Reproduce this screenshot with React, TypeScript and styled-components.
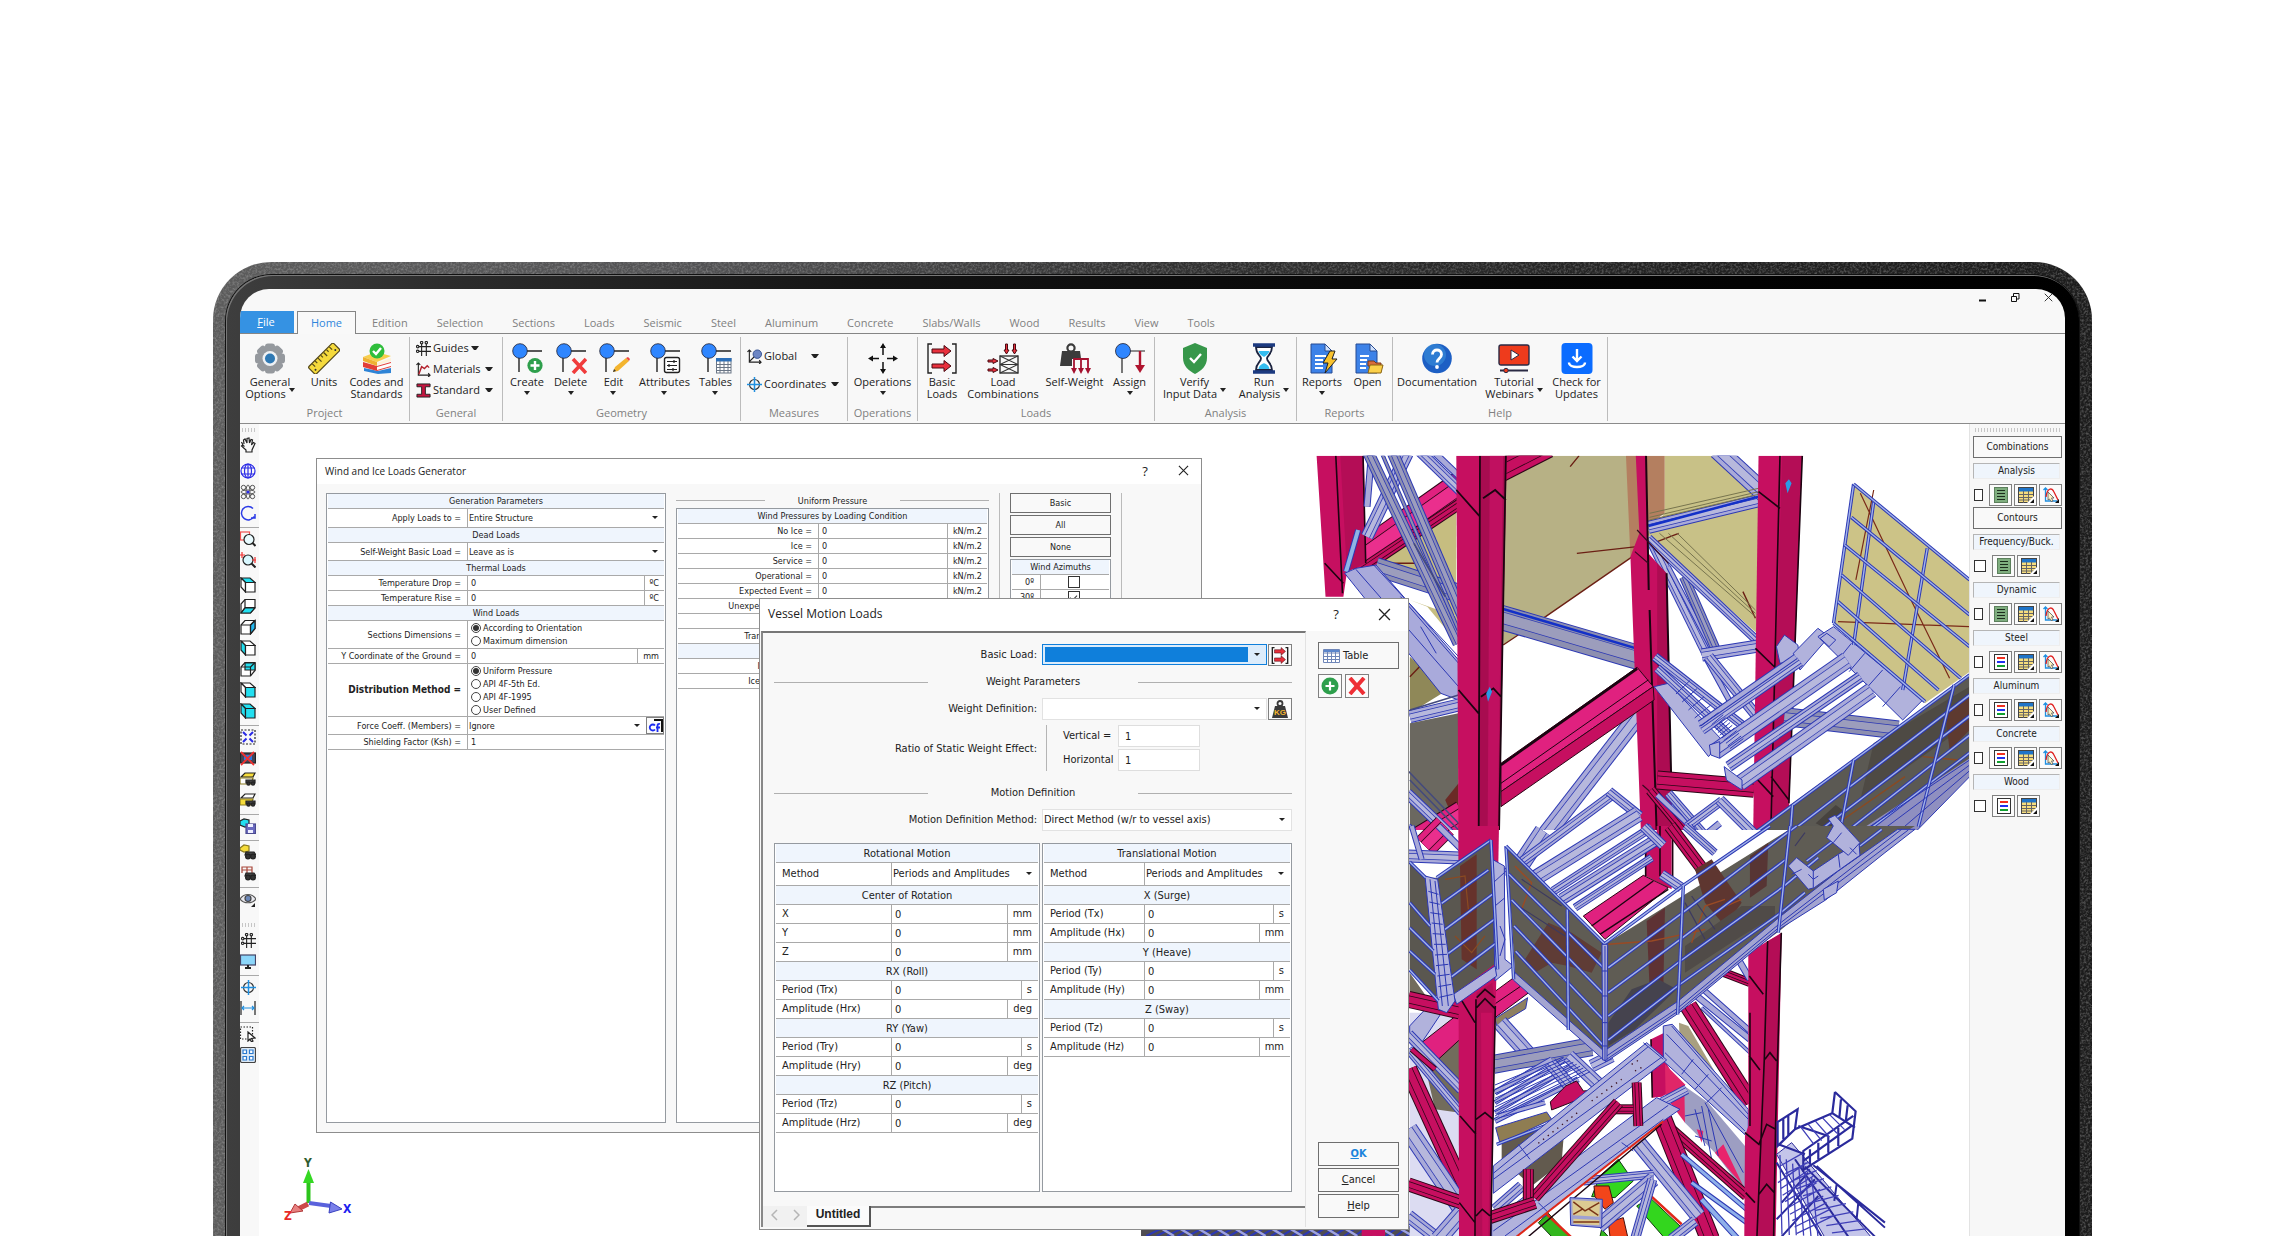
import React, { useId, useState } from "react";
import styled, { createGlobalStyle } from "styled-components";

const UI = `"Open Sans", "Noto Sans", sans-serif`;
const FORM = `"DejaVu Sans Condensed", "DejaVu Sans", "Noto Sans", sans-serif`;

const GlobalStyle = createGlobalStyle`
  *, *::before, *::after { box-sizing: border-box; }
  html, body { margin: 0; background: #fff; }
  button, input, select { font: inherit; color: inherit; margin: 0; }
`;

/* ---------- device ---------- */

const Page = styled.main`
  height: 100vh;
  min-height: 700px;
  overflow: hidden;
  display: flex;
  flex-direction: column;
  padding: 262px 200px 0 213px;
  background: #fff;
  color: #222;
  font-family: ${UI};
  font-size: 11px;
  line-height: 12px;
`;
const Shell = styled.div`
  position: relative;
  flex: 1;
  min-height: 0;
  display: flex;
  padding: 13px 13px 0;
  border-radius: 58px 58px 0 0;
  overflow: hidden;
  background: linear-gradient(90deg, #5c5c5c 0, #535355 25%, #333 50%, #242424 75%, #1c1c1c 100%);
`;
const Grain = styled.svg`
  position: absolute;
  inset: 0;
  width: 100%;
  height: 100%;
  opacity: 0.3;
`;
const Bezel = styled.div`
  position: relative;
  flex: 1;
  min-width: 0;
  display: flex;
  padding: 14px 14px 0 14px;
  border-radius: 46px 46px 0 0;
  box-shadow: 0 0 0 1px #111, inset 1px 1px 0 #777;
  background: linear-gradient(90deg, #3e3e3e 0, #2c2c2c 12%, #141414 35%, #050505 70%, #000 100%);
`;
const Screen = styled.div`
  flex: 1;
  min-width: 0;
  display: flex;
  flex-direction: column;
  overflow: hidden;
  border-radius: 29px 29px 0 0;
  background: #f8f8f8;
`;

/* ---------- title bar and tabs ---------- */

const TitleBar = styled.header`
  height: 22px;
  display: flex;
  justify-content: flex-end;
  align-items: flex-start;
  padding: 1px 9px 0 0;
  gap: 17px;
`;
const CaptionButton = styled.button`
  width: 16px;
  height: 14px;
  padding: 0;
  border: 0;
  background: none;
  display: grid;
  place-items: center;
`;
const TabBar = styled.nav`
  height: 23px;
  display: flex;
  align-items: stretch;
  border-bottom: 1px solid #858585;
`;
const FileTab = styled.button`
  width: 54px;
  margin-right: 3px;
  padding: 0 2px 0 0;
  border: 0;
  background: #3592e3;
  color: #fff;
`;
const Tab = styled.button<{ $on?: boolean }>`
  padding: 0 12px 0 15px;
  margin-bottom: -1px;
  border: 1px solid ${(p) => (p.$on ? "#858585" : "transparent")};
  border-bottom: 0;
  background: ${(p) => (p.$on ? "#f9f9f9" : "none")};
  color: ${(p) => (p.$on ? "#2f86dc" : "#808080")};
  ${(p) => p.$on && "width: 59px; padding: 0;"}
`;

/* ---------- ribbon ---------- */

const Ribbon = styled.div`
  height: 90px;
  display: flex;
  padding: 3px 0 2px;
  border-bottom: 1px solid #8b8b8b;
`;
const Group = styled.section<{ $w: number }>`
  width: ${(p) => p.$w}px;
  display: flex;
  flex-direction: column;
  justify-content: space-between;
  border-right: 1px solid #bcbcbc;
`;
const GroupItems = styled.div`
  display: flex;
`;
const GroupName = styled.h2`
  margin: 0;
  height: 15px;
  font-size: 11px;
  font-weight: 400;
  line-height: 14px;
  text-align: center;
  color: #808080;
`;
const Tool = styled.button<{ $w: number }>`
  width: ${(p) => p.$w}px;
  padding: 6px 0 0;
  border: 0;
  background: none;
  display: flex;
  flex-direction: column;
  align-items: center;
  gap: 2px;
  white-space: nowrap;
  font-weight: 500;
`;
const ToolText = styled.span<{ $below?: boolean }>`
  display: flex;
  flex-direction: column;
  align-items: center;
  gap: ${(p) => (p.$below ? 3 : 0)}px;
`;
const LastLine = styled.span`
  display: flex;
  gap: 3px;
`;
const Caret = styled.i`
  display: block;
  flex: none;
  border: 3px solid transparent;
  border-top: 4px solid #222;
  border-bottom: 0;
`;
const SmallTools = styled.div<{ $gap: number; $top: number }>`
  display: flex;
  flex-direction: column;
  gap: ${(p) => p.$gap}px;
  padding: ${(p) => p.$top}px 0 0 6px;
`;
const SmallTool = styled.button<{ $w: number }>`
  height: 16px;
  padding: 0;
  border: 0;
  background: none;
  display: grid;
  grid-template-columns: 15px ${(p) => p.$w}px 8px;
  align-items: center;
  gap: 2px;
  text-align: left;
  white-space: nowrap;
  font-weight: 500;
`;

/* ---------- work area ---------- */

const Work = styled.div`
  flex: 1;
  min-height: 0;
  display: flex;
`;
const LeftBar = styled.aside`
  width: 19px;
  display: flex;
  flex-direction: column;
  background: #f8f8f8;
`;
const SideButton = styled.button`
  height: 21px;
  width: 16px;
  padding: 0 0 3px;
  border: 0;
  background: none;
  flex: none;
  display: grid;
  place-items: center;
`;
const SideRule = styled.hr`
  flex: none;
  width: 100%;
  height: 1px;
  margin: 2px 0;
  border: 0;
  background: #a9a9a9;
`;
const Grip = styled.div`
  flex: none;
  height: 4px;
  margin: 4px 2px;
  background: repeating-linear-gradient(90deg, #c6c6c6 0 1px, transparent 1px 3px);
`;
const Spacer = styled.div<{ $h: number }>`
  flex: none;
  height: ${(p) => p.$h}px;
`;
const Canvas = styled.section`
  position: relative;
  flex: 1;
  min-width: 0;
  overflow: hidden;
  background: #fff;
`;
const Model = styled.svg`
  position: absolute;
  left: 0;
  top: 0;
  width: 1710px;
  height: 813px;
`;
const RightBar = styled.aside`
  width: 96px;
  padding: 0 3px 0 3px;
  border-left: 1px solid #e3e3e3;
  background: #f7f7f7;
  display: flex;
  flex-direction: column;
  font-family: ${FORM};
  font-size: 10px;
`;
const PushButton = styled.button<{ $h?: number; $start?: boolean }>`
  flex: none;
  height: ${(p) => p.$h ?? 22}px;
  padding: 0 4px;
  border: 1px solid #6f6f6f;
  background: #f9f9f9;
  display: flex;
  align-items: center;
  justify-content: ${(p) => (p.$start ? "flex-start" : "center")};
  gap: 3px;
`;
const PanelName = styled.h3`
  margin: 5px 2px 5px 0;
  height: 16px;
  border: 1px solid #b5b5b5;
  border-right-color: #eee;
  border-bottom-color: #eee;
  background: #eff5fc;
  font-size: 10px;
  font-weight: 400;
  line-height: 14px;
  text-align: center;
`;
const PanelTools = styled.div<{ $tight?: boolean }>`
  height: 22px;
  margin-bottom: ${(p) => (p.$tight ? 1 : 0)}px;
  display: flex;
  align-items: center;
  gap: 2px;
`;
const Tick = styled.input`
  appearance: none;
  width: 12px;
  height: 12px;
  margin: 0 4px 0 1px;
  border: 1px solid #333;
  background: #fff;
  display: grid;
  place-items: center;
  &:checked::after {
    content: "";
    width: 7px;
    height: 4px;
    border: solid #333;
    border-width: 0 0 1px 1px;
    transform: rotate(-45deg);
  }
`;
const IconButton = styled.button<{ $w?: number; $h?: number }>`
  flex: none;
  width: ${(p) => p.$w ?? 23}px;
  height: ${(p) => p.$h ?? 22}px;
  padding: 0;
  border: 1px solid #808080;
  background: #fbfbfb;
  display: grid;
  place-items: center;
`;

/* ---------- windows ---------- */

const Window = styled.section<{ $x: number; $y: number; $w: number; $h: number }>`
  position: absolute;
  left: ${(p) => p.$x}px;
  top: ${(p) => p.$y}px;
  width: ${(p) => p.$w}px;
  min-height: ${(p) => p.$h}px;
  display: flex;
  flex-direction: column;
  border: 1px solid #8d8d8d;
  background: #f8f8f8;
  font-family: ${FORM};
`;
const WindowTitle = styled.header<{ $h: number; $size: number; $gap: number; $end: number }>`
  height: ${(p) => p.$h}px;
  display: flex;
  align-items: center;
  gap: ${(p) => p.$gap}px;
  padding: 0 ${(p) => p.$end}px 2px 8px;
  background: #fff;
  font-family: ${UI};
  font-size: ${(p) => p.$size}px;
`;
const WindowName = styled.h2`
  flex: 1;
  margin: 0;
  font-size: inherit;
  font-weight: 400;
`;
const WindowButton = styled.button`
  width: 16px;
  height: 16px;
  padding: 0;
  border: 0;
  background: none;
  font-size: 13px;
  display: grid;
  place-items: center;
`;
const WindBody = styled.div`
  flex: 1;
  display: grid;
  grid-template-columns: 340px 313px 1px 101px 1px;
  column-gap: 10px;
  padding: 9px;
  font-size: 9px;
`;
const Column = styled.div`
  display: flex;
  flex-direction: column;
`;
const RuleColumn = styled.div`
  background: #bbb;
`;
const Buttons = styled.div`
  display: flex;
  flex-direction: column;
  gap: 2px;
`;
const Sheet = styled.div`
  flex: 1;
  border: 1px solid #959aa0;
  background: #fff;
  padding: 0 1px;
`;
const SheetHead = styled.h4<{ $h: number }>`
  margin: 0;
  height: ${(p) => p.$h}px;
  border-bottom: 1px solid #a9a9a9;
  background: #eff5fd;
  font-size: inherit;
  font-weight: 400;
  line-height: ${(p) => p.$h}px;
  text-align: center;
`;
const SheetRow = styled.div<{ $h: number; $label: number; $left?: boolean }>`
  height: ${(p) => p.$h}px;
  display: grid;
  grid-template-columns: ${(p) => p.$label}px minmax(0, 1fr) auto;
  border-bottom: 1px solid #a9a9a9;
  white-space: nowrap;
  > :first-child {
    align-self: center;
    ${(p) => (p.$left ? "padding-left: 6px;" : "padding-right: 6px; text-align: right;")}
  }
`;
const RowLabel = styled.label``;
const StrongLabel = styled.span`
  font-size: 10px;
  font-weight: 700;
`;
const RowText = styled.span``;
const ValueBox = styled.input`
  width: 100%;
  height: 100%;
  padding: 0 3px;
  border: 0;
  border-left: 1px solid #a9a9a9;
  background: none;
  outline: 0;
`;
const Unit = styled.span<{ $pad: number }>`
  padding: 0 ${(p) => p.$pad}px 0 5px;
  border-left: 1px solid #a9a9a9;
  display: flex;
  align-items: center;
`;
const SelectWrap = styled.span<{ $h?: number; $framed?: boolean; $active?: boolean }>`
  position: relative;
  display: block;
  min-width: 0;
  ${(p) => (p.$h ? `height: ${p.$h}px;` : "")}
  ${(p) => (p.$framed ? "border: 1px solid #e2e2e2; background: #fff;" : "border-left: 1px solid #a9a9a9;")}
  ${(p) =>
    p.$active &&
    `border: 1px solid #0f7fdb; background: linear-gradient(#0f7fdb, #0f7fdb) 2px 2px / calc(100% - 20px) calc(100% - 4px) no-repeat #dcecfb;`}
`;
const SelectBox = styled.select`
  appearance: none;
  display: block;
  width: 100%;
  height: 100%;
  padding: 0 16px 0 1px;
  border: 0;
  outline: 0;
  background: none;
`;
const SelectCaret = styled(Caret)`
  position: absolute;
  right: 6px;
  top: calc(50% - 2px);
  border-top-width: 3px;
  pointer-events: none;
`;
const ForceCell = styled.div`
  display: grid;
  grid-template-columns: minmax(0, 1fr) 18px;
`;
const Radios = styled.div`
  border-left: 1px solid #a9a9a9;
  padding-left: 3px;
  display: flex;
  flex-direction: column;
  justify-content: center;
`;
const RadioLabel = styled.label`
  height: 13px;
  display: flex;
  align-items: center;
  gap: 2px;
`;
const Radio = styled.input`
  appearance: none;
  width: 10px;
  height: 10px;
  margin: 0;
  border: 1px solid #444;
  border-radius: 50%;
  background: #fff;
  display: grid;
  place-items: center;
  &:checked::after {
    content: "";
    width: 6px;
    height: 6px;
    border-radius: 50%;
    background: #333;
  }
`;
const AzimuthCell = styled.div`
  border-left: 1px solid #a9a9a9;
  display: grid;
  place-items: center;
`;
const Divider = styled.h3<{ $h: number; $side: number }>`
  margin: 0;
  height: ${(p) => p.$h}px;
  display: flex;
  align-items: center;
  justify-content: space-between;
  font-size: inherit;
  font-weight: 400;
  &::before, &::after {
    content: "";
    width: ${(p) => p.$side}px;
    height: 1px;
    background: #b0b0b0;
  }
`;
const VesselBody = styled.div`
  flex: 1;
  display: flex;
  font-size: 11px;
`;
const VesselPanel = styled.div`
  width: 545px;
  margin: 0 0 2px 1px;
  display: flex;
  flex-direction: column;
  border: 1px solid #e2e2e2;
  border-top: 2px solid #777;
  border-left: 2px solid #888;
  border-bottom: 0;
  padding-top: 11px;
`;
const VesselForm = styled.div`
  padding: 0 13px 0 11px;
`;
const FormRow = styled.div`
  min-height: 22px;
  display: grid;
  grid-template-columns: 263px minmax(0, 1fr);
  column-gap: 5px;
  align-items: center;
  > :first-child { text-align: right; }
`;
const ControlPair = styled.div`
  display: grid;
  grid-template-columns: minmax(0, 1fr) 24px;
  gap: 1px;
`;
const Ratio = styled.div`
  margin: 5px 0 6px 4px;
  border-left: 1px solid #b5b5b5;
  display: grid;
  grid-template-columns: 52px 82px;
  gap: 2px 3px;
  padding-left: 16px;
  align-items: center;
`;
const NumberBox = styled.input`
  width: 100%;
  height: 22px;
  padding: 0 6px;
  border: 1px solid #dedede;
  background: #fff;
`;
const Sheets = styled.div`
  flex: 1;
  display: grid;
  grid-template-columns: 266px 250px;
  gap: 2px;
  margin-top: 12px;
  padding-left: 11px;
`;
const SheetTabs = styled.div`
  height: 21px;
  margin-top: 14px;
  display: flex;
`;
const Pager = styled.button`
  width: 22px;
  padding: 0;
  border: 0;
  background: #f1f1f1;
  color: #aaa;
`;
const SheetTab = styled.button`
  width: 64px;
  padding: 0 0 4px;
  border: solid #555;
  border-width: 0 2px 2px 0;
  background: #fbfbfb;
  font-weight: 700;
  font-family: "Liberation Sans", sans-serif;
  font-size: 12px;
`;
const TabFill = styled.div`
  flex: 1;
  border-top: 2px solid #7d7d7d;
`;
const Actions = styled.div`
  flex: 1;
  padding: 11px 9px 11px 12px;
  display: flex;
  flex-direction: column;
  justify-content: space-between;
`;
const ActionStack = styled.div<{ $gap: number }>`
  display: flex;
  flex-direction: column;
  gap: ${(p) => p.$gap}px;
`;
const IconPair = styled.div`
  display: flex;
  gap: 3px;
`;
const Primary = styled.b`
  color: #1c84dc;
`;
const AxisLabel = styled.text`
  font: 700 12px ${FORM};
`;

/* ---------- ribbon icons ---------- */

const Big = ({ children }: { children: React.ReactNode }) => (
  <svg width="32" height="31" viewBox="0 0 32 31" fill="none" aria-hidden>
    {children}
  </svg>
);
const Node = () => (
  <>
    <path d="M10 8H31M8 10V29" stroke="#222" strokeWidth="1.4" />
    <circle cx="9" cy="8" r="7.3" fill="#2f86ff" stroke="#223" strokeWidth="0.8" />
  </>
);
const RedArrow = ({ d }: { d: string }) => <path d={d} fill="#e8303c" stroke="#4a0a12" strokeWidth="1" />;

const icons: Record<string, React.ReactNode> = {
  gear: (
    <Big>
      {[0, 45, 90, 135].map((a) => (
        <rect key={a} x="11" y="0.5" width="10" height="30" rx="3" fill="#95999e" transform={`rotate(${a} 16 15.5)`} />
      ))}
      <circle cx="16" cy="15.5" r="11" fill="#95999e" />
      <circle cx="16" cy="15.5" r="7.5" fill="#eef1f4" />
      <circle cx="16" cy="15.5" r="5" fill="#2f79b4" />
    </Big>
  ),
  ruler: (
    <Big>
      <g transform="rotate(-45 16 15.5)">
        <rect x="-1.5" y="10.5" width="35" height="10.5" rx="1.5" fill="#f5da3c" stroke="#54481a" strokeWidth="1.2" />
        <path d="M4 11v4M8 11v3M12 11v5M16 11v3M20 11v5M24 11v3M28 11v4" stroke="#54481a" strokeWidth="1.2" />
        <circle cx="2" cy="17.5" r="1" fill="#333" />
        <circle cx="30" cy="17.5" r="1" fill="#333" />
      </g>
    </Big>
  ),
  books: (
    <Big>
      <path d="M3 25 17 28 30 25v5L17 31 3 28z" fill="#2e84d6" />
      <path d="M2 19 16 23 30 19v5L16 28 2 24z" fill="#e23e37" />
      <path d="M16 24 30 20v3L16 27z" fill="#fff" />
      <path d="M2 14 15 9 30 13 16 19z" fill="#f7cf4d" />
      <path d="M2 14 16 19V23L2 18z" fill="#eeb132" />
      <path d="M16 20 30 15v3L16 22z" fill="#fff2d8" />
      <circle cx="16" cy="8" r="7.5" fill="#2fbe3c" />
      <path d="m12 8 3 3 5-6" stroke="#fff" strokeWidth="2.4" />
    </Big>
  ),
  create: (
    <Big>
      <Node />
      <circle cx="24" cy="22.5" r="7.6" fill="#2e9f4c" />
      <path d="M24 18v9M19.5 22.5h9" stroke="#fff" strokeWidth="2.4" />
    </Big>
  ),
  del: (
    <Big>
      <Node />
      <path d="m18 16 13 14M31 16 18 30" stroke="#f03c3c" strokeWidth="3.6" />
    </Big>
  ),
  edit: (
    <Big>
      <Node />
      <path d="m15 29 2-5L28 15l3 3-11 10z" fill="#f3b42f" />
      <path d="m28 15 3 3 1-2-2-2z" fill="#e44" />
      <path d="m15 29 1-3 2 2z" fill="#333" />
    </Big>
  ),
  attrs: (
    <Big>
      <Node />
      <rect x="15.5" y="14.5" width="15" height="15" rx="2" fill="#fff" stroke="#222" strokeWidth="1.4" />
      <path d="M18 18.5h10M18 22.5h10M18 26.5h10M25 17v3M20 21v3M24 25v3" stroke="#222" strokeWidth="1.2" />
    </Big>
  ),
  tables: (
    <Big>
      <Node />
      <rect x="16.5" y="15.5" width="14.5" height="14.5" fill="#fff" stroke="#6a7686" />
      <rect x="16" y="15" width="15.5" height="3.5" fill="#2c6fb8" />
      <path d="M20 18v12M24 18v12M28 18v12M17 21.5h14M17 24.5h14M17 27.5h14" stroke="#6a7686" strokeWidth="1" />
    </Big>
  ),
  move: (
    <Big>
      <path d="M16 12V4M16 19v8M12 15.5H4M20 15.5h8" stroke="#111" strokeWidth="1.5" />
      <path d="m16 0 3 5h-6zM16 31l3-5h-6zM1 15.5l5-3v6zM31 15.5l-5-3v6z" fill="#111" />
    </Big>
  ),
  basic: (
    <Big>
      <path d="M6 1H2v29h4M26 1h4v29h-4" stroke="#222" strokeWidth="1.4" />
      <RedArrow d="M6 6h12V2.500l7 5.500-7 5.500V10H6z" />
      <RedArrow d="M6 21h12v-3.500l7 5.500-7 5.500V25H6z" />
    </Big>
  ),
  comb: (
    <Big>
      <rect x="13" y="13" width="18" height="17" stroke="#333" strokeWidth="1.4" />
      <path d="M13 21.5h18M13 13l18 8.500M31 13l-18 8.500M13 21.5 31 30M31 21.5 13 30" stroke="#333" strokeWidth="1.1" />
      <RedArrow d="M18.500 1v6H17l2.500 4L22 7h-1.500V1zM26.500 1v6H25l2.500 4L30 7h-1.500V1z" />
      <RedArrow d="M1 17h5v-1.500l5 2.500-5 2.500V19H1zM1 26h5v-1.500l5 2.500-5 2.500V28H1z" />
    </Big>
  ),
  weight: (
    <Big>
      <path d="M3 8h18l2 15H1z" fill="#3b3b3b" />
      <circle cx="12" cy="5" r="3.6" stroke="#3b3b3b" strokeWidth="2.2" />
      <path d="M13 16h18v12H13z" fill="#f8f8f8" />
      <path d="M15 27V16h14v11M22 16v11" stroke="#a5112f" strokeWidth="1.8" />
      <path d="m15 31-3-6h6zM22 31l-3-6h6zM29 31l-3-6h6z" fill="#a5112f" />
    </Big>
  ),
  assign: (
    <Big>
      <path d="M10 8H31M8 10V30" stroke="#222" strokeWidth="1.2" />
      <circle cx="9" cy="8" r="7.5" fill="#2f86ff" stroke="#223" strokeWidth="0.8" />
      <path d="M26 8v15" stroke="#b0142f" strokeWidth="2.4" />
      <path d="m26 30-5-8h10z" fill="#b0142f" />
    </Big>
  ),
  shield: (
    <Big>
      <path d="M16 0 28 5v10c0 8-6 13-12 16C10 28 4 23 4 15V5z" fill="#37974a" />
      <path d="m11 15 4 4 7-8" stroke="#fff" strokeWidth="2.4" />
    </Big>
  ),
  glass: (
    <Big>
      <path d="M8 4c0 8 5 8 5 11.500S8 20 8 27h16c0-7-5-8-5-11.500S24 12 24 4z" fill="#fff" stroke="#1c2440" strokeWidth="1.8" />
      <path d="M10.500 8h11c-.6 3-4 5-5.500 6-1.500-1-5-3-5.500-6zM10.500 26c.5-4 4-5 5.500-6 1.500 1 5 2 5.500 6z" fill="#35bdf0" />
      <path d="M5 2h22M5 29h22" stroke="#1c3a80" strokeWidth="3.4" />
    </Big>
  ),
  report: (
    <Big>
      <path d="M5 1h14l7 7v22H5z" fill="#3d82e8" stroke="#274b92" />
      <path d="M19 1v7h7z" fill="#cfe0fb" stroke="#274b92" />
      <path d="M9 13h11M9 17h8M9 21h8M9 25h8" stroke="#fff" strokeWidth="1.8" />
      <path d="m24 8-7 12h5l-3 10 12-14h-5l3-8z" fill="#f9c22e" stroke="#222" />
    </Big>
  ),
  open: (
    <Big>
      <path d="M4 1h14l7 7v22H4z" fill="#3d82e8" stroke="#274b92" />
      <path d="M18 1v7h7z" fill="#cfe0fb" stroke="#274b92" />
      <path d="M8 13h9M8 17h7M8 21h6M8 25h6" stroke="#fff" strokeWidth="1.8" />
      <path d="M16 18h6l2 2h5v3H16z" fill="#d86b3c" stroke="#7a3a1a" />
      <path d="M18 22h13l-2 8H16z" fill="#fbd04a" stroke="#8a6410" />
    </Big>
  ),
  help: (
    <Big>
      <circle cx="16" cy="15.5" r="14.8" fill="#1d5fc4" />
      <circle cx="14" cy="12" r="11" fill="#3f9ae0" opacity="0.5" />
      <path d="M11.500 11.500c0-6 9-6 9 0 0 4-4.500 4-4.500 8" stroke="#fff" strokeWidth="2.8" />
      <circle cx="16" cy="24" r="1.9" fill="#fff" />
    </Big>
  ),
  video: (
    <Big>
      <rect x="1" y="2" width="30" height="20" rx="2" fill="#ee3b1c" stroke="#2a2a44" strokeWidth="1.4" />
      <path d="m13 7 8 5-8 5z" fill="#fff" stroke="#2a2a44" />
      <path d="M2 27.500h28" stroke="#2a2a44" strokeWidth="1.8" />
      <circle cx="8" cy="27.5" r="2.2" fill="#ee3b1c" stroke="#2a2a44" />
    </Big>
  ),
  update: (
    <Big>
      <rect x="0.5" y="0" width="31" height="31" rx="4" fill="#0b6cff" />
      <path d="M16 6v11M11.500 13.500 16 18l4.500-4.500M8 19.500c0 6 16 6 16 0" stroke="#fff" strokeWidth="2.4" />
    </Big>
  ),
};

const GridIcon = () => (
  <svg width="15" height="15" viewBox="0 0 16 16" fill="none" stroke="#222" strokeWidth="1.2" aria-hidden>
    <path d="M3 6h13M3 11h13M6 3v13M11 3v13" />
    <circle cx="6" cy="1.8" r="1.3" />
    <circle cx="11" cy="1.8" r="1.3" />
    <circle cx="1.8" cy="6" r="1.3" />
    <circle cx="1.8" cy="11" r="1.3" />
  </svg>
);
const TargetIcon = () => (
  <svg width="15" height="15" viewBox="0 0 16 16" fill="none" aria-hidden>
    <circle cx="8" cy="8" r="5.3" stroke="#333" strokeWidth="1.2" />
    <path d="M8 0v16M0 8h16" stroke="#1f8fe0" strokeWidth="1.6" />
  </svg>
);
const smallIcons: Record<string, React.ReactNode> = {
  Guides: <GridIcon />,
  Materials: (
    <svg width="15" height="15" viewBox="0 0 16 16" fill="none" aria-hidden>
      <path d="M2.500 1v13H15M.5 3l2-2 2 2M13 12l2 2-2 2" stroke="#222" strokeWidth="1.2" />
      <path d="m3 13 3-8 3 2 3-3 2 2" stroke="#b3212d" strokeWidth="1.5" />
    </svg>
  ),
  Standard: (
    <svg width="15" height="15" viewBox="0 0 16 16" aria-hidden>
      <path d="M1 1h14v3H10v8h5v3H1v-3h5V4H1z" fill="#c3153f" stroke="#222" />
    </svg>
  ),
  Global: (
    <svg width="15" height="15" viewBox="0 0 16 16" fill="none" aria-hidden>
      <path d="M2.500 1v13H15M.5 3l2-2 2 2M13 12l2 2-2 2M3 13l5-5" stroke="#222" strokeWidth="1.2" />
      <circle cx="11" cy="5.5" r="4.5" fill="#6d86c4" stroke="#34508f" />
    </svg>
  ),
  Coordinates: <TargetIcon />,
};

type ToolDef = { icon: string; w: number; text: string[]; menu?: boolean };
type GroupDef = { name: string; w: number; tools?: ToolDef[]; small?: { name: string; w: number }[]; gap?: number; top?: number };

const groups: GroupDef[] = [
  {
    name: "Project",
    w: 170,
    tools: [
      { icon: "gear", w: 60, text: ["General", "Options"], menu: true },
      { icon: "ruler", w: 48, text: ["Units"] },
      { icon: "books", w: 57, text: ["Codes and", "Standards"] },
    ],
  },
  {
    name: "General",
    w: 93,
    gap: 5,
    top: 3,
    small: [
      { name: "Guides", w: 36 },
      { name: "Materials", w: 50 },
      { name: "Standard", w: 50 },
    ],
  },
  {
    name: "Geometry",
    w: 238,
    tools: [
      { icon: "create", w: 48, text: ["Create"], menu: true },
      { icon: "del", w: 39, text: ["Delete"], menu: true },
      { icon: "edit", w: 47, text: ["Edit"], menu: true },
      { icon: "attrs", w: 55, text: ["Attributes"], menu: true },
      { icon: "tables", w: 47, text: ["Tables"], menu: true },
    ],
  },
  {
    name: "Measures",
    w: 107,
    gap: 12,
    top: 11,
    small: [
      { name: "Global", w: 45 },
      { name: "Coordinates", w: 65 },
    ],
  },
  { name: "Operations", w: 70, tools: [{ icon: "move", w: 69, text: ["Operations"], menu: true }] },
  {
    name: "Loads",
    w: 237,
    tools: [
      { icon: "basic", w: 48, text: ["Basic", "Loads"] },
      { icon: "comb", w: 74, text: ["Load", "Combinations"] },
      { icon: "weight", w: 69, text: ["Self-Weight"] },
      { icon: "assign", w: 41, text: ["Assign"], menu: true },
    ],
  },
  {
    name: "Analysis",
    w: 142,
    tools: [
      { icon: "shield", w: 79, text: ["Verify", "Input Data"], menu: true },
      { icon: "glass", w: 60, text: ["Run", "Analysis"], menu: true },
    ],
  },
  {
    name: "Reports",
    w: 96,
    tools: [
      { icon: "report", w: 50, text: ["Reports"], menu: true },
      { icon: "open", w: 41, text: ["Open"] },
    ],
  },
  {
    name: "Help",
    w: 215,
    tools: [
      { icon: "help", w: 88, text: ["Documentation"] },
      { icon: "video", w: 66, text: ["Tutorial", "Webinars"], menu: true },
      { icon: "update", w: 59, text: ["Check for", "Updates"] },
    ],
  },
];

const tabs = ["Home", "Edition", "Selection", "Sections", "Loads", "Seismic", "Steel", "Aluminum", "Concrete", "Slabs/Walls", "Wood", "Results", "View", "Tools"];

/* ---------- side bar icons ---------- */

const S = ({ children }: { children: React.ReactNode }) => (
  <svg width="16" height="16" viewBox="0 0 16 16" fill="none" stroke="#222" strokeWidth="1.2" aria-hidden>
    {children}
  </svg>
);
const Cube = ({ top, left, front }: { top?: boolean; left?: boolean; front?: boolean }) => (
  <S>
    <path d="M1 1h9l5 4.500H5.500z" fill={top ? "#22dff0" : "#fff"} />
    <path d="m1 1 4.500 4.500V15L1 10z" fill={left ? "#22dff0" : "#fff"} />
    <path d="M5.500 5.500H15V15H5.500z" fill={front ? "#22dff0" : "#fff"} />
  </S>
);
const BackCube = ({ bottom, right, back }: { bottom?: boolean; right?: boolean; back?: boolean }) => (
  <S>
    <path d="M5 1.500h10v8L10.500 15H1V6z" fill="#fff" />
    {back && <path d="M5 2h10v7H5z" fill="#22dff0" />}
    {bottom && <path d="M1 15 5 10h10l-4.500 5z" fill="#22dff0" />}
    {right && <path d="M10.500 6 15 1.500v8L10.500 15z" fill="#22b8f0" />}
    {bottom ? <path d="M5 1.500v8L1 15M5 9.500h10" /> : <path d="M1 6h9.500V15M10.500 6 15 1.500" />}
  </S>
);
const Truck = ({ full }: { full?: boolean }) => (
  <S>
    <path d="M1 6 5 2h10l-2 4z" fill={full ? "#fff" : "#f6dc3a"} />
    <path d="M0 7h13l-2 6H0z" fill={full ? "#f6dc3a" : "#fff"} stroke="#8a7a20" />
    <path d="M6 9h9v3H6z" fill="#444" />
    <circle cx="8.5" cy="12.5" r="1.6" fill="#333" />
    <circle cx="13" cy="12.5" r="1.6" fill="#333" />
  </S>
);
const Binoc = ({ red }: { red?: boolean }) => (
  <S>
    {red ? <path d="M2 8V2h10v6M7 2v6M2 5h10" stroke="#a8473a" /> : <path d="m0 4 4-3 5 1v5l-5 1-4-2z" fill="#f6dc3a" stroke="#8a7a20" />}
    <path d="M6 8h8l2 3H5z" fill="#444" />
    <circle cx="8" cy="12.5" r="2.4" fill="#333" />
    <circle cx="13" cy="12.5" r="2.4" fill="#333" />
  </S>
);

type SideItem = ["icon", string, React.ReactNode] | ["rule"] | ["grip"] | ["space", number];
const sideItems: SideItem[] = [
  ["grip"],
  ["icon", "Pan", <S><path d="M3 8 1.500 5M4 7 3.500 3l1.500-1L7 6V1.500L9 1l.5 5L11 2.500l1.500.5-1 5 2-2.500 1.500 1L12 13v2H6v-2L1.500 9l1-1 2 1.500" /></S>],
  ["space", 5],
  ["icon", "Orbit", <S><g stroke="#2a2ae6"><circle cx="8" cy="8" r="7" /><ellipse cx="8" cy="8" rx="3.5" ry="7" /><path d="M1.500 5h13M1.500 11h13M8 1v14" /></g></S>],
  ["icon", "Spin", <S><g stroke="#444" strokeWidth="0.9"><circle cx="3.5" cy="3.5" r="2.2" /><circle cx="12.5" cy="3.5" r="2.2" /><circle cx="3.5" cy="12.5" r="2.2" /><circle cx="12.5" cy="12.5" r="2.2" /><ellipse cx="8" cy="8" rx="2" ry="7" /><ellipse cx="8" cy="8" rx="7" ry="2" /></g><circle cx="8" cy="8" r="1.6" fill="#2a2ae6" stroke="none" /></S>],
  ["icon", "Rotate", <S><path d="M13 3.500a6.700 6.700 0 1 0 1 8M15 9v4h-4" stroke="#2a3ae6" strokeWidth="1.5" /></S>],
  ["rule"],
  ["icon", "Zoom window", <S><rect x="0.5" y="1" width="9" height="8" stroke="#f05050" /><circle cx="9" cy="8.5" r="5" fill="#e8fbff" /><path d="m12.500 12 3 3" strokeWidth="2" /></S>],
  ["icon", "Zoom", <S><circle cx="8" cy="8" r="5" fill="#d8f8ff" /><path d="m11.500 11.500 4 4" strokeWidth="2" /><path d="M2 0v6M0 3h5M15 5v6M12 8h4" stroke="#f03030" /></S>],
  ["space", 4],
  ["icon", "Top view", <Cube top />],
  ["icon", "Bottom view", <BackCube bottom />],
  ["icon", "Right view", <BackCube right />],
  ["icon", "Left view", <Cube left />],
  ["icon", "Back view", <BackCube back />],
  ["icon", "Front view", <Cube front />],
  ["icon", "Isometric view", <Cube top left front />],
  ["rule"],
  ["icon", "Fit", <S><rect x="1" y="1" width="14" height="14" strokeDasharray="2 1.5" /><path d="m3 3 3.500 3.500M13 3 9.500 6.500M3 13l3.500-3.500M13 13 9.500 9.500" stroke="#2a2ae6" strokeWidth="2" /></S>],
  ["icon", "Remove fit", <S><rect x="0.5" y="3" width="15" height="10" fill="#445" /><path d="M4 5h8v5H4z" fill="#2a7ae6" stroke="none" /><path d="m1 2 13 13M14 2 1 15" stroke="#f03030" strokeWidth="1.8" /></S>],
  ["icon", "Solid", <Truck />],
  ["icon", "Rendered", <Truck full />],
  ["rule"],
  ["icon", "Save view", <S><path d="m0 3 4-2 5 1v6L5 9 0 7z" fill="#22dff0" /><rect x="6" y="6" width="9.5" height="9.5" fill="#6a6ac0" stroke="#4a4a90" /><path d="M8 12h5v3H8zM8 6h5v3H8z" fill="#eef" stroke="none" /></S>],
  ["rule"],
  ["icon", "Find", <Binoc />],
  ["icon", "Find load", <Binoc red />],
  ["rule"],
  ["icon", "Visibility", <S><path d="M0 8c4-6 12-6 16 0-4 5-12 5-16 0z" fill="#e8e8ee" stroke="#555" /><circle cx="8" cy="7.5" r="3" fill="#6b87b8" stroke="#444" /><path d="M15 12v4h-4z" fill="#222" stroke="none" /></S>],
  ["space", 8],
  ["grip"],
  ["icon", "Guides", <GridIcon />],
  ["icon", "Display", <S><rect x="0.5" y="2" width="15" height="10" fill="#8cd6fa" stroke="#446" /><path d="M5 15h6M8 12v3" strokeWidth="2" /></S>],
  ["rule"],
  ["icon", "Origin", <TargetIcon />],
  ["icon", "Dimension", <S><path d="M1 1v14M15 1v14" /><path d="M2 8h12M4 6 2 8l2 2M12 6l2 2-2 2" stroke="#1f8fe0" /></S>],
  ["rule"],
  ["icon", "Select", <S><rect x="0.5" y="1" width="12" height="12" strokeDasharray="1.5 1.5" /><path d="m8 6 7 6-3.500.5L13 15l-1.500 1-1.500-3-2 2z" fill="#fff" /></S>],
  ["icon", "Snap grid", <S><rect x="0.5" y="0.5" width="15" height="15" rx="1.5" fill="#dbe8f5" stroke="#444" /><path d="M3 3h3.500v3.500H3zM9.500 3H13v3.500H9.500zM3 9.500h3.500V13H3zM9.500 9.500H13V13H9.500z" fill="#fff" stroke="#2a7ad0" /></S>],
];

/* ---------- right panel ---------- */

const ListIcon = ({ colour }: { colour?: boolean }) => (
  <svg width="14" height="16" viewBox="0 0 14 16" aria-hidden>
    <rect x="0.5" y="0.5" width="13" height="15" fill={colour ? "#fff" : "#7fae7f"} stroke={colour ? "#333" : "#5c805c"} />
    {colour ? (
      <>
        <path d="M3 4h8" stroke="#f03020" strokeWidth="2" />
        <path d="M3 8h8" stroke="#2030f0" strokeWidth="2" />
        <path d="M3 12h8" stroke="#10a030" strokeWidth="2" />
      </>
    ) : (
      <path d="M3 3.500h8M3 6.500h8M3 9.500h8M3 12.500h8" stroke="#1c2c1c" />
    )}
  </svg>
);
const TableIcon = () => (
  <svg width="16" height="16" viewBox="0 0 16 16" aria-hidden>
    <rect x="0.5" y="0.5" width="15" height="15" fill="#f7dd7c" stroke="#444" />
    <rect x="1" y="1" width="14" height="3.5" fill="#1f74c8" />
    <path d="M5.500 4v12M10.500 4v12M1 7.500h14M1 10.500h14M1 13h14" stroke="#666" />
    <path d="M16 9v7H9z" fill="#fff" />
    <path d="M16 12v4h-4z" fill="#111" />
  </svg>
);
const GraphIcon = () => (
  <svg width="16" height="16" viewBox="0 0 16 16" fill="none" aria-hidden>
    <path d="M2.500 1v13H14M.5 3l2-2 2 2" stroke="#1f8fe0" strokeWidth="1.3" />
    <path d="M3 10C4 1 9 0 11 5l4 8" stroke="#e02020" strokeWidth="1.3" />
    <path d="m5 5 6 6H8.500L10 14l-2 .5L6.500 12 5 13z" fill="#fff3c4" stroke="#555" strokeWidth="0.8" />
    <path d="M16 12v4h-4z" fill="#111" />
  </svg>
);
const panels: { name: string; colour?: boolean; graph?: boolean }[] = [
  { name: "Frequency/Buck." },
  { name: "Dynamic", graph: true },
  { name: "Steel", colour: true, graph: true },
  { name: "Aluminum", colour: true, graph: true },
  { name: "Concrete", colour: true, graph: true },
  { name: "Wood", colour: true },
];
const ResultPanel = ({ name, colour, graph, tight }: { name: string; colour?: boolean; graph?: boolean; tight?: boolean }) => (
  <>
    <PanelName>{name}</PanelName>
    <PanelTools $tight={tight}>
      <Tick type="checkbox" aria-label={`Show ${name}`} />
      <IconButton aria-label={`${name} diagram`}><ListIcon colour={colour} /></IconButton>
      <IconButton aria-label={`${name} table`}><TableIcon /></IconButton>
      {graph && <IconButton aria-label={`${name} graph`}><GraphIcon /></IconButton>}
    </PanelTools>
  </>
);

/* ---------- structural model ---------- */

type Beam = [number, number, number, number, number, string?];
const LAV = "#a9aad8";
const SLATE = "#8d8fb0";
const RED = "#c60f60";
const PINK = "#e0217f";
const BLUE = "#2c38b4";
const INK = "#1b0410";

const faces: Record<string, string> = { [PINK]: "#ea2f8d", [LAV]: "#b7b8dc", [SLATE]: "#9c9dbc" };

/* One member: dark outline, flanges and a web between two thin lines. */
const Members = ({ items, edge }: { items: Beam[]; edge?: string }) => (
  <>
    {items.map(([x1, y1, x2, y2, w, c = LAV], i) => {
      const line = edge ?? (c === RED || c === PINK ? "#2a0616" : BLUE);
      const at = { x1, y1, x2, y2, vectorEffect: "non-scaling-stroke" as const };
      return (
        <g key={i}>
          <line {...at} stroke={line} strokeWidth={w + 1} />
          <line {...at} stroke={c} strokeWidth={w - 1} />
          {w > 6 && <line {...at} stroke={line} strokeWidth={w * 0.5} />}
          {w > 6 && <line {...at} stroke={faces[c] ?? c} strokeWidth={w * 0.5 - 1.5} />}
        </g>
      );
    })}
  </>
);
const Lines = ({ d, c = BLUE, w = 1 }: { d: string; c?: string; w?: number }) => (
  <path d={d} fill="none" stroke={c} strokeWidth={w} vectorEffect="non-scaling-stroke" />
);
const Plate = ({ d, c = "#b1b2dc", line = BLUE }: { d: string; c?: string; line?: string }) => (
  <path d={d} fill={c} stroke={line} strokeWidth="1" vectorEffect="non-scaling-stroke" />
);
const Rails = ({ items }: { items: string[] }) => (
  <>
    {items.map((d) => (
      <g key={d}>
        <Lines d={d} w={3.4} />
        <Lines d={d} c="#a3b4ea" w={1.4} />
      </g>
    ))}
  </>
);
/* Evenly spaced lines between two edges. */
const rungs = (a: number[], b: number[], n: number) =>
  Array.from({ length: n }, (_, i) => {
    const t = (i + 0.5) / n;
    const p = (k: number) => (a[k] + (a[k + 2] - a[k]) * t).toFixed(0);
    const q = (k: number) => (b[k] + (b[k + 2] - b[k]) * t).toFixed(0);
    return `M${p(0)} ${p(1)}L${q(0)} ${q(1)}`;
  }).join("");

const Upper = () => (
  <g transform="translate(1280 430) scale(0.4464 0.3333)" clipPath="url(#upperArea)">
    <path d="M500 77H800V370L595 560 500 645z" fill="#b7b185" />
    <path d="M775 77H862V250L820 290 800 380 785 380z" fill="#b47f60" />
    <path d="M862 77H975L1075 190 1068 610 820 310 862 250z" fill="#c8c187" />
    <path d="M215 400 395 245V560L330 480 300 440z" fill="#c6bd80" />
    <path d="M291 510 330 530 398 640V560z" fill="#c6bd80" />
    <path d="M291 680 375 780 291 850z" fill="#8f8858" />
    <path d="M291 880 400 850V1260H291z" fill="#6b6860" />
    <path d="M370 1110 400 1060V1200z" fill="#6b2a26" />
    <Lines d="M595 560 800 370M500 645 595 560M665 370 800 350M650 110 670 77M845 335 893 310M1037 485 1065 565M215 400H320M291 740 320 700" c="#6b1f14" w={1.4} />
    <Members
      items={[
        [170, 392, 410, 165, 30, PINK],
        [170, 430, 410, 215, 10, RED],
        [490, 125, 600, 50, 22, RED],
        [300, 1240, 410, 1150, 26, PINK],
      ]}
    />
    <path d="M82 77H188L192 400 150 425 142 500H102z" fill={RED} />
    <path d="M135 77H185L190 400 150 425z" fill="#b40d56" />
    <Lines d="M125 77 140 490M186 77 192 400M100 400 142 460" c={INK} w={1.6} />
    <Members
      items={[
        [285, 70, 195, 320, 12],
        [205, 70, 195, 230, 6],
        [215, 410, 400, 490, 18, SLATE],
        [175, 300, 148, 425, 5, "#8eb4e6"],
      ]}
    />
    <Plate d="M145 430 170 415 215 405 400 690V810L360 790z" c="#a9aadb" />
    <Lines d="M170 418 400 770M210 405 400 680M270 500 400 700M315 590 350 670" />
    <Members
      items={[
        [195, 60, 400, 640, 11, SLATE],
        [250, 60, 410, 560, 11, SLATE],
        [225, 60, 400, 600, 3, SLATE],
        [310, 60, 410, 190, 10],
        [340, 60, 410, 150, 6],
        [291, 860, 410, 822, 12],
        [285, 1090, 410, 1250, 10],
        [285, 1190, 340, 1280, 8],
      ]}
    />
    <Lines d="M291 840 400 795M285 1020 400 1180M291 1050 400 1200M300 340 370 500" c="#444a7c" w={1.6} />
    <Members
      items={[
        [825, 292, 1085, 208, 12],
        [980, 60, 1085, 190, 18],
        [835, 340, 960, 680, 10],
        [870, 410, 970, 665, 4],
        [905, 440, 975, 655, 9, SLATE],
        [825, 325, 1075, 640, 8],
        [945, 675, 1085, 645, 12],
        [955, 685, 1010, 820, 5],
        [960, 680, 1075, 870, 10],
        [820, 825, 560, 1275, 17],
        [490, 560, 835, 695, 24, SLATE],
      ]}
    />
    <Lines d="M828 250 1072 175M828 262 1072 185M828 270 1072 193M850 310 1065 560M890 310 1065 540M870 310 1065 550" c="#77744e" w={1} />
    <Lines d="M500 537 830 668M825 288 1072 200" c="#1330c8" w={2.5} />
    <path d="M797 77H820L825 370 865 430 880 1260H810L790 560 785 380 805 310z" fill={RED} />
    <path d="M845 400 866 430 880 1260H845z" fill="#ad0c52" />
    <Lines d="M820 77 826 480M828 540 845 1260M866 430 876 1030" c={INK} w={2} />
    <Lines d="M800 300 870 400M795 365 825 400M835 690 870 730M812 1065 850 1110" c="#3a0820" w={1.2} />
    <Plate d="M495 1000 800 712 836 770 495 1085z" c={PINK} line="#2a0616" />
    <Plate d="M495 1085 836 770 838 810 495 1130z" c={RED} line="#2a0616" />
    <Lines d="M495 1005 800 716" c={INK} w={2.6} />
    <Lines d="M495 1060 825 750" c={INK} w={1} />
    <Members
      items={[
        [845, 1050, 1062, 1075, 18, RED],
        [830, 1080, 960, 1290, 10, RED],
        [845, 1095, 920, 1190, 5],
        [870, 1090, 1000, 1290, 8],
      ]}
    />
    <Plate d="M838 770 870 760 990 930 960 980z" />
    <Members
      items={[
        [840, 680, 1040, 890, 8],
        [845, 715, 1010, 920, 8],
      ]}
    />
    <path d="M1072 77H1170L1140 1140 1060 1210z" fill={RED} />
    <path d="M1125 77H1170L1140 1140 1100 1170z" fill="#b40d56" />
    <Lines d="M1120 77 1100 1180M1170 77 1140 1120M1072 185 1120 235M1065 655 1115 720M1060 1035 1105 1100M1100 1040 1140 1110" c={INK} w={1.6} />
    <Members items={[[1130, 860, 1385, 900, 18, SLATE]]} />
    <Plate d="M1112 650 1130 615 1160 645 1165 690 1120 700z" />
    <Plate d="M1150 670 1205 595 1230 620 1165 720z" />
    <Plate d="M1205 620 1240 590 1440 810 1395 870z" />
    <Lines d="M1280 640 1250 690M1310 670 1275 725M1350 720 1310 780M1390 770 1350 830M1210 625 1225 610 1245 630 1230 650z" />
    <Members
      items={[
        [945, 900, 1165, 695, 9],
        [940, 880, 1155, 680, 5],
        [975, 965, 1270, 690, 16],
        [1005, 1010, 1300, 740, 10],
        [1030, 1060, 1325, 780, 15],
      ]}
    />
    <Plate d="M962 945 985 935 985 985 965 975z" />
    <Plate d="M995 1010 1035 1050 1035 1080 1000 1050z" />
    <Lines d={rungs([880, 780, 950, 900], [910, 740, 990, 860], 5) + rungs([965, 880, 1010, 960], [990, 850, 1040, 930], 10)} />
    <path d="M1285 165 1545 450V725L1445 820 1240 580z" fill="#ccc387" />
    <Lines d="M1300 190 1410 500 1500 745M1250 575 1545 590M1330 180 1290 450" c="#7a2a18" w={1.2} />
    <Rails
      items={[
        "M1285 162 1240 580",
        "M1330 215 1285 645",
        "M1450 355 1395 780",
        "M1280 262 1545 555",
        "M1265 345 1545 650",
        "M1258 435 1525 745",
        "M1250 515 1475 780",
        "M1240 580 1445 815",
        "M1285 162 1545 450",
      ]}
    />
    <Members
      items={[
        [912, 1190, 990, 1112, 8],
        [985, 1110, 1060, 1210, 10],
        [930, 1240, 985, 1180, 6],
        [915, 1190, 960, 1270, 8],
      ]}
    />
    <path d="M1030 1262 1040 1225 1545 735V1010L1430 1190 1350 1262z" fill="#5b5953" />
    <path d="M1330 940 1545 770V880L1300 1110z" fill="#4e4a44" />
    <path d="M1490 850 1545 790V900L1500 960z" fill="#5e3a30" />
    <path d="M1545 985V1040L1428 1200H1300z" fill="#8f8fc0" />
    <path d="M1200 1180 1245 1125 1260 1140 1230 1200z" fill="#47433f" />
    <Lines d="M1260 1170 1400 1040M1440 980 1520 990" c="#8a4a22" w={1.4} />
    <Rails
      items={[
        "M1040 1232 1545 735",
        "M1145 1205 1545 795",
        "M1150 1262 1545 858",
        "M1215 1262 1545 915",
        "M1270 1250 1545 968",
        "M1510 765 1430 1190",
        "M1285 990 1258 1180",
        "M1148 1125 1140 1262",
      ]}
    />
    <Lines d="M1545 990 1310 1200M1545 1005 1350 1200M1545 1022 1390 1200M1545 1040 1428 1200" />
    <path d="M395 77H508L490 1262H400z" fill={RED} />
    <path d="M450 77H505L490 1262H445z" fill="#a80c50" />
    <path d="M470 77H500L487 1262H465z" fill="#c01060" />
    <Lines d="M448 77 445 1262M506 77 490 1262M395 180 448 260M455 205 482 180 506 210M400 780 445 850M450 800 478 775 495 800" c={INK} w={1.8} />
    <path d="M462 790 470 770 475 785 466 815zM1132 160 1140 148 1146 160 1137 190z" fill="#2a9be6" />
  </g>
);

const Lower = () => (
  <g transform="translate(1405 826) scale(0.3333)">
    <path d="M-792 1200H20V1230H-792z" fill="#4f4c52" />
    <Lines d={rungs([-792, 1230, 20, 1230], [-730, 1200, 60, 1200], 26)} w={2} />
    <Lines d={rungs([-770, 1200, 0, 1200], [-720, 1230, 50, 1230], 14)} c="#9fa3e0" w={2.5} />
    <path d="M-130 1200H-60V1230H-130z" fill={RED} />

    <path d="M14 560H165V1230H14z" fill="#dcdcf2" />
    <path d="M14 440 70 520H14zM60 720 165 640V860L90 850z" fill="#726c5c" />
    <Plate d="M14 600 70 540 110 560 50 650 14 620z" />
    <Plate d="M50 650 165 560V640L100 700z" c={PINK} line="#2a0616" />
    <Members
      items={[
        [60, 60, 120, 0, 24, PINK],
        [10, 90, 165, 96, 12],
        [20, 0, 50, 100, 5],
        [100, 0, 170, 70, 6],
        [10, 520, 165, 555, 16, RED],
        [10, 625, 170, 790, 10],
        [10, 670, 170, 860, 8],
        [20, 670, 90, 730, 5, RED],
        [10, 730, 170, 1080, 17, RED],
        [10, 910, 165, 1140, 18],
        [10, 1075, 170, 1130, 13, RED],
        [10, 1170, 100, 1240, 12],
        [100, 1240, 170, 1160, 16],
      ]}
    />

    <path d="M755 0H800V190L722 150V45L755 30z" fill={RED} />
    <Lines d="M765 0V150M803 0V180M722 45V150" c={INK} w={1.6} />
    <Members
      items={[
        [415, 15, 345, 120, 17],
        [300, 145, 625, -96, 9],
        [612, -104, 704, -30, 9],
        [385, 160, 700, -36, 15],
        [445, 195, 740, 4, 8],
        [470, 220, 765, 34, 11],
        [510, 245, 740, 95, 7],
        [716, 2, 774, 58, 9],
      ]}
    />
    <Plate d="M535 270 715 148 790 185 600 340z" c={PINK} line="#2a0616" />
    <Lines d="M560 300 745 165M585 325 790 190" c={INK} w={1.4} />
    <Members
      items={[
        [795, 0, 900, 140, 12, RED],
        [840, 0, 930, 80, 7],
        [770, 145, 830, 185, 9],
      ]}
    />

    <Plate d="M265 500 340 445 385 490 270 575z" c={PINK} line="#2a0616" />
    <Lines d="M268 535 370 465" c={INK} />
    <Plate d="M270 578 368 515 362 548 275 600z" c="#8d7f60" />
    <Members
      items={[
        [285, 590, 375, 690, 15],
        [265, 715, 560, 662, 18, SLATE],
        [270, 800, 440, 700, 5],
        [270, 830, 480, 700, 4],
        [270, 860, 500, 720, 4],
        [270, 885, 520, 760, 5],
        [280, 870, 420, 830, 4],
        [435, 710, 520, 810, 12],
        [490, 690, 580, 775, 13],
        [560, 720, 620, 690, 12],
      ]}
    />
    <Lines d={rungs([270, 770, 270, 890], [470, 690, 560, 740], 9)} />
    <Plate d="M482 780 515 765 535 795 600 790 440 852 436 828z" c={RED} line="#2a0616" />
    <path d="M290 950 480 880 470 1010 380 1080 290 1000z" fill="#625a4e" />
    <Plate d="M272 905 425 858 440 880 285 952z" c="#8f7d52" />
    <Rails items={["M275 955 445 890"]} />

    <path d="M738 640 778 620V700L800 740 835 775 770 812 742 815z" fill={RED} />
    <path d="M780 715 840 775V890L782 812z" fill="#e02668" />
    <path d="M822 590 850 600 960 790 900 740 825 660z" fill="#a89f80" />
    <Lines d="M738 640 742 815M778 620V700" c={INK} w={1.6} />
    <Members
      items={[
        [875, 510, 1035, 640, 6],
        [900, 495, 1035, 615, 5],
        [890, 545, 1035, 680, 3],
        [945, 435, 1035, 470, 8, RED],
        [1000, 400, 1035, 460, 6],
        [850, 540, 1035, 830, 17, RED],
      ]}
    />
    <path d="M838 780 910 830 1020 960V1100L930 980 840 890z" fill="#9d9ec2" />
    <path d="M930 980 955 955 1015 1080 980 1040zM875 910 895 915 890 950z" fill="#e8246c" />
    <Lines d="M870 850 900 960M890 840 920 1000M910 850 940 990M840 870 890 860M870 930 920 945M900 830 1015 1040" />
    <Plate d="M775 600 802 595 1030 850V935L775 705z" />
    <Lines d="M785 625 1030 880M800 600 1030 865M830 745 865 700M870 790 910 745M905 830 950 785M780 680 1020 915" />
    <Members
      items={[
        [765, 880, 1025, 1110, 10, RED],
        [772, 880, 915, 1240, 19, RED],
        [830, 985, 1025, 1150, 4, "#8fb0ea"],
        [860, 1070, 1025, 1190, 4, "#8fb0ea"],
        [890, 1120, 1000, 1240, 5, "#8fb0ea"],
        [700, 950, 880, 1170, 15],
        [770, 830, 845, 790, 9],
      ]}
    />
    <Plate d="M585 1050 640 1000 685 1065 630 1115 560 1112z" c="#33d61e" line="#123a12" />
    <Plate d="M735 1115 825 1200 800 1232H775L695 1140z" c="#33d61e" line="#123a12" />
    <Plate d="M400 1190 430 1162 495 1232H440zM590 1210 610 1232H585z" c="#33b61e" line="#123a12" />
    <Plate d="M567 1080 612 1080 625 1130 600 1150 570 1112z" c="#f2451a" line="#411" />
    <Plate d="M610 1190 655 1175 668 1232H615z" c="#f2451a" line="#411" />
    <Lines d="M740 1112 830 1195M420 1160 500 1235" c="#e02818" w={2.5} />
    <Members
      items={[
        [535, 1065, 745, 1045, 8],
        [580, 1200, 745, 1060, 14],
        [690, 1240, 742, 1060, 9],
        [800, 1240, 870, 1185, 10],
      ]}
    />
    <Members items={[[270, 1150, 350, 1080, 10], [265, 1240, 420, 1160, 6]]} />
    <Plate d="M260 1185 755 815 825 850 775 885 330 1235H260z" />
    <Lines d="M265 1215 790 838M300 1230 775 880M400 1130 430 1160M650 950 685 975" />
    <Lines d="M335 1232 775 886" c="#e02818" w={2} />
    <Lines d="M370 1232 770 895" c={INK} w={1.4} />
    <Plate d="M265 1020 725 650 785 702 265 1102z" />
    <Lines d="M265 1042 730 662M265 1060 775 690M340 955 375 1000M715 650 775 700" />
    <path d="M400 952 520 858M680 715 705 700M690 735 715 722M560 825 650 760" stroke="#3a1020" strokeWidth="4" strokeDasharray="4 14" fill="none" />
    <Members
      items={[
        [695, 770, 700, 900, 9, RED],
        [685, 850, 620, 850, 9, RED],
        [388, 1115, 640, 830, 11, RED],
        [370, 1030, 370, 1140, 10, RED],
        [255, 1175, 390, 1130, 12, RED],
      ]}
    />
    <Plate d="M495 1115 592 1120 590 1205 497 1198z" c="#9fa1d2" />
    <path d="M502 1122 585 1127 583 1172 503 1168zM505 1178 583 1182V1198L506 1193z" fill="#dccb92" />
    <Lines d="M505 1128 540 1155 583 1130M505 1165 535 1148M580 1168 550 1148M505 1188H583" c="#7a3418" w={1.5} />

    <path d="M1030 380 1130 320 1112 1230H1018L1020 930 1030 900z" fill={RED} />
    <path d="M1090 345 1126 325 1110 1230H1056z" fill="#b40d56" />
    <Lines d="M1088 345 1078 700 1056 1230M1129 320 1112 890 1106 1230M1033 690 1065 732M1080 700 1095 680 1115 705M1033 450 1075 505M1020 920 1062 955 1085 895 1112 910M1062 1105 1085 1075 1108 1100M1022 1100 1050 1130M1035 560V900" c={INK} w={1.6} />
    <path d="M160 0H282L272 560 255 1232H162z" fill={RED} />
    <path d="M215 500 262 470 270 540 255 1232H212z" fill="#b40d56" />
    <path d="M228 560H262L250 1232H232z" fill="#c60f5e" />
    <Lines d="M213 520 210 1232M271 540 257 1232M165 515 210 590M215 515 240 490 270 515M215 545 240 518 270 548M213 880 240 860 266 882M165 870 213 925M213 1170 232 1150 255 1170M163 1130 210 1190" c={INK} w={1.6} />

    <path d="M14 110 60 155H95L255 45 275 410 140 510H90L14 430z" fill="#5a5750" />
    <path d="M165 120 215 85V430L170 400z" fill="#66332c" />
    <Lines d="M120 160 180 150 190 250M150 330 200 380 240 330" c="#8a4a22" w={1.2} />
    <Plate d="M262 100 298 120 300 400 325 420 270 465z" />
    <Lines d="M265 170 298 140M270 240 300 215M285 300 300 340 285 390" />
    <Plate d="M145 505 270 420 275 450 155 535z" />
    <Plate d="M60 150 98 160 150 525 125 560 100 550z" />
    <Lines d={"M75 160 112 540M90 165 130 540" + rungs([68, 180, 105, 530], [98, 190, 145, 520], 11)} />
    <Rails
      items={[
        "M95 155 258 42",
        "M110 232 250 132",
        "M120 310 262 205",
        "M130 382 268 280",
        "M140 452 275 350",
        "M258 42 278 430",
        "M14 108 62 155",
        "M14 230 75 300",
        "M14 305 85 375",
        "M14 375 90 445",
        "M14 432 100 525",
      ]}
    />
    <path d="M305 60 600 355V700L330 440z" fill="#5f5c54" />
    <path d="M430 290 500 320 590 380 560 440 490 420 440 410 390 440 360 400z" fill="#5f3c36" />
    <path d="M600 355 1170 0H1530L1440 55 1130 310 820 540 600 700z" fill="#5f5c54" />
    <path d="M725 285 780 245 775 490 735 510z" fill="#5e3234" />
    <path d="M870 130 920 100 1010 230 960 300 900 230z" fill="#5e3630" />
    <path d="M1035 90 1090 50 1085 180 1035 215z" fill="#573534" />
    <path d="M610 590 680 490 760 460 815 490 690 610 610 660z" fill="#45434e" />
    <path d="M840 440 1010 330 1110 270V240L1010 240 840 360z" fill="#504b48" />
    <Lines d="M610 355 740 345 860 320 900 310M860 350 900 240 960 220M330 120 380 170 350 250M940 250 1010 220" c="#9a4a24" w={1.4} />
    <Lines d="M840 230 900 340M860 210 930 310M1170 60 1200 20M350 160 470 240M340 240 480 330" c="#3c3a60" w={1.2} />
    <Plate d="M602 672 820 525 1125 272 1300 135 1478 10H1530L1440 80 1262 222 1130 305 820 562 602 708z" c="#a3a4d0" />
    <Lines d="M605 690 820 545 1130 288 1490 10M605 700 820 555 1130 298 1510 12" />
    <Plate d="M1255 190 1300 165 1295 200 1258 222z" />
    <Plate d="M330 440 600 678V705L325 462z" c="#a3a4d0" />
    <Rails
      items={[
        "M303 60 326 460",
        "M312 145 600 430",
        "M320 222 600 508",
        "M327 300 600 586",
        "M332 376 600 664",
        "M487 250 490 612",
        "M303 60 600 355",
        "M610 425 830 262 1145 22 1175 0",
        "M610 500 826 340 1140 102",
        "M610 570 822 408 1135 182 1240 95",
        "M610 642 818 480 1125 262 1200 200",
        "M1205 105 1330 10",
        "M1365 60 1430 10",
        "M600 352 835 178 1095 0",
        "M835 180 818 565",
        "M1155 0 1120 320",
      ]}
    />
    <Plate d="M591 355H608L606 702H593z" c="#a9aad8" />
    <Lines d="M600 360V700M591 435H608M591 510H608M591 590H608M591 660H608" />
    <Plate d="M1150 120 1175 95 1225 135 1300 85 1362 50 1365 88 1228 185 1210 190z" />
    <Plate d="M1265 35 1285 0 1270 -22 1290 -32 1365 50 1330 88z" />
    <Lines d="M1225 135V185M1300 85 1305 125M1190 130 1160 145M1210 145 1225 160 1240 150M1310 20 1285 50M1335 65 1355 85" />

    <Plate d="M1115 985 1160 950 1320 1140 1400 1235H1260z" c="#c4c5ea" line="#2a2a9c" />
    <Lines
      d="M1115 890 1178 850 1170 910 1118 960V890M1135 880V940M1150 870V930M1290 798 1352 856 1342 938 1195 1032V975L1345 870M1290 798 1282 862 1350 905M1308 820 1303 878M1328 838 1322 890M1170 910 1285 860M1120 955 1200 985M1195 1005 1340 900M1180 900 1270 930M1215 970V1015M1240 950V1000M1270 930V980M1300 905V960"
      c="#2a2a9c"
      w={2.2}
    />
    <Lines d="M1200 1022 1410 1232M1235 1020 1440 1205M1225 1018 1440 1190M1130 1130 1210 1040M1115 1180 1230 1060M1130 1232 1240 1110M1115 1010 1250 1232M1295 1075 1288 1125M1170 1000 1330 1232M1360 1130 1355 1180" c="#2a2a9c" w={2} />
    <Lines
      d={rungs([1115, 1010, 1290, 1232], [1180, 970, 1400, 1220], 10) + rungs([1115, 1060, 1180, 1232], [1200, 1000, 1290, 1180], 9) + rungs([1120, 1225, 1250, 1232], [1115, 980, 1230, 1060], 6) + rungs([1175, 905, 1285, 862], [1215, 960, 1330, 905], 5)}
      c="#3f3fb8"
      w={1.3}
    />
  </g>
);

const Axes = () => (
  <g>
    <path d="M308.500 1203V1182" stroke="#2cc41c" strokeWidth="4" />
    <path d="m308.500 1169 5.500 14h-11z" fill="#35d823" />
    <path d="m309 1203 22 3" stroke="#5a62dc" strokeWidth="4" />
    <path d="m342 1209-13 4 1.500-11z" fill="#7a80ea" stroke="#3a42c0" />
    <path d="m308 1204-10 5" stroke="#cc4a4a" strokeWidth="5" />
    <path d="m290 1213 5-9 8 7z" fill="#e88080" stroke="#b03838" />
    <AxisLabel x="304" y="1167" fill="#2e5c2e">Y</AxisLabel>
    <AxisLabel x="343" y="1213" fill="#1c1cf0">X</AxisLabel>
    <AxisLabel x="284" y="1220" fill="#e82828">Z</AxisLabel>
  </g>
);

/* ---------- form parts ---------- */

const Combo = ({ id, label, options, h, framed, active }: { id?: string; label?: string; options: string[]; h?: number; framed?: boolean; active?: boolean }) => (
  <SelectWrap $h={h} $framed={framed} $active={active}>
    <SelectBox id={id} aria-label={label}>
      {options.map((o) => (
        <option key={o}>{o}</option>
      ))}
    </SelectBox>
    <SelectCaret />
  </SelectWrap>
);

const ValueRow = ({ label, value = "0", unit, h, labelW, pad, left }: { label: string; value?: string; unit?: string; h: number; labelW: number; pad: number; left?: boolean }) => {
  const id = useId();
  return (
    <SheetRow $h={h} $label={labelW} $left={left}>
      <RowLabel htmlFor={id}>{label}</RowLabel>
      <ValueBox id={id} defaultValue={value} />
      {unit && <Unit $pad={pad}>{unit}</Unit>}
    </SheetRow>
  );
};

const ComboRow = ({ label, options, h, labelW, left }: { label: string; options: string[]; h: number; labelW: number; left?: boolean }) => {
  const id = useId();
  return (
    <SheetRow $h={h} $label={labelW} $left={left}>
      <RowLabel htmlFor={id}>{label}</RowLabel>
      <Combo id={id} options={options} />
    </SheetRow>
  );
};

const RadioSet = ({ name, options }: { name: string; options: string[] }) => {
  const [picked, pick] = useState(options[0]);
  return (
    <Radios role="radiogroup" aria-label={name}>
      {options.map((o) => (
        <RadioLabel key={o}>
          <Radio type="radio" name={name} checked={picked === o} onChange={() => pick(o)} />
          {o}
        </RadioLabel>
      ))}
    </Radios>
  );
};

const Cross = ({ size = 11 }: { size?: number }) => (
  <svg width={size} height={size} viewBox="0 0 12 12" stroke="#222" strokeWidth="1.2" aria-hidden>
    <path d="m1 1 10 10M11 1 1 11" />
  </svg>
);
const Chevron = ({ d }: { d: string }) => (
  <svg width="7" height="12" viewBox="0 0 7 12" fill="none" stroke="#b5b5b5" strokeWidth="1.5" aria-hidden>
    <path d={d} />
  </svg>
);

const WindWindow = () => {
  const row = { h: 15, labelW: 139, pad: 5 };
  return (
    <Window $x={57} $y={34} $w={886} $h={675}>
      <WindowTitle $h={25} $size={10} $gap={22} $end={10}>
        <WindowName>Wind and Ice Loads Generator</WindowName>
        <WindowButton aria-label="Help">?</WindowButton>
        <WindowButton aria-label="Close"><Cross /></WindowButton>
      </WindowTitle>
      <WindBody>
        <Sheet>
          <SheetHead $h={15}>Generation Parameters</SheetHead>
          <ComboRow label="Apply Loads to =" options={["Entire Structure"]} h={19} labelW={139} />
          <SheetHead $h={15}>Dead Loads</SheetHead>
          <ComboRow label="Self-Weight Basic Load =" options={["Leave as is"]} h={18} labelW={139} />
          <SheetHead $h={15}>Thermal Loads</SheetHead>
          <ValueRow label="Temperature Drop =" unit="ºC" {...row} />
          <ValueRow label="Temperature Rise =" unit="ºC" {...row} />
          <SheetHead $h={15}>Wind Loads</SheetHead>
          <SheetRow $h={28} $label={139}>
            <RowText>Sections Dimensions =</RowText>
            <RadioSet name="Sections Dimensions" options={["According to Orientation", "Maximum dimension"]} />
          </SheetRow>
          <ValueRow label="Y Coordinate of the Ground =" unit="mm" {...row} />
          <SheetRow $h={53} $label={139}>
            <StrongLabel>Distribution Method =</StrongLabel>
            <RadioSet name="Distribution Method" options={["Uniform Pressure", "API 4F-5th Ed.", "API 4F-1995", "User Defined"]} />
          </SheetRow>
          <SheetRow $h={18} $label={139}>
            <RowLabel htmlFor="force">Force Coeff. (Members) =</RowLabel>
            <ForceCell>
              <Combo id="force" options={["Ignore"]} />
              <IconButton $w={18} $h={17} aria-label="Force coefficients">
                <svg width="15" height="14" viewBox="0 0 15 14" fill="none" aria-hidden>
                  <path d="M6 1h8v12" stroke="#111" strokeWidth="2" />
                  <path d="M7 6.500a3 3 0 1 0 0 4M12 5c-2-.5-2.500.5-2.500 2v6M8 8.500h4" stroke="#1c2cf0" strokeWidth="1.8" />
                </svg>
              </IconButton>
            </ForceCell>
          </SheetRow>
          <ValueRow label="Shielding Factor (Ksh) =" value="1" {...row} />
        </Sheet>
        <Column>
          <Divider $h={15} $side={89}>Uniform Pressure</Divider>
          <Sheet>
            <SheetHead $h={15}>Wind Pressures by Loading Condition</SheetHead>
            {["No Ice", "Ice", "Service", "Operational", "Expected Event", "Unexpected Event", "Erection", "Transportation"].map((n) => (
              <ValueRow key={n} label={`${n} =`} unit="kN/m.2" {...row} labelW={140} />
            ))}
            <SheetHead $h={15}>Ice</SheetHead>
            <ValueRow label="Ice Density =" unit="kN/m.3" {...row} labelW={140} />
            <ValueRow label="Ice Thickness =" unit="mm" {...row} labelW={140} />
          </Sheet>
        </Column>
        <RuleColumn />
        <Buttons>
          <PushButton $h={20}>Basic</PushButton>
          <PushButton $h={20}>All</PushButton>
          <PushButton $h={20}>None</PushButton>
          <Sheet>
            <SheetHead $h={15}>Wind Azimuths</SheetHead>
            {["0º", "30º", "60º", "90º"].map((a, i) => (
              <SheetRow key={a} $h={15} $label={28}>
                <RowLabel htmlFor={`az${i}`}>{a}</RowLabel>
                <AzimuthCell>
                  <Tick id={`az${i}`} type="checkbox" defaultChecked={i > 0} />
                </AzimuthCell>
              </SheetRow>
            ))}
          </Sheet>
        </Buttons>
        <RuleColumn />
      </WindBody>
    </Window>
  );
};

const VesselWindow = () => {
  const v = { h: 19, labelW: 115, pad: 6, left: true };
  const r = { ...v, labelW: 100 };
  return (
    <Window $x={500} $y={174} $w={650} $h={632}>
      <WindowTitle $h={32} $size={12} $gap={32} $end={16}>
        <WindowName>Vessel Motion Loads</WindowName>
        <WindowButton aria-label="Help">?</WindowButton>
        <WindowButton aria-label="Close"><Cross size={13} /></WindowButton>
      </WindowTitle>
      <VesselBody>
        <VesselPanel>
          <VesselForm>
            <FormRow>
              <RowLabel htmlFor="basic">Basic Load:</RowLabel>
              <ControlPair>
                <Combo id="basic" options={[""]} h={21} active />
                <IconButton $w={24} aria-label="Basic loads">
                  <svg width="18" height="17" viewBox="0 0 32 31" fill="none" aria-hidden>
                    <path d="M6 1H2v29h4M26 1h4v29h-4" stroke="#222" strokeWidth="2.5" />
                    <RedArrow d="M6 5h12V1l8 7-8 7v-4H6z" />
                    <RedArrow d="M6 20h12v-4l8 7-8 7v-4H6z" />
                  </svg>
                </IconButton>
              </ControlPair>
            </FormRow>
            <Divider $h={32} $side={154}>Weight Parameters</Divider>
            <FormRow>
              <RowLabel htmlFor="wdef">Weight Definition:</RowLabel>
              <ControlPair>
                <Combo id="wdef" options={[""]} h={22} framed />
                <IconButton $w={24} aria-label="Weight definition">
                  <svg width="18" height="19" viewBox="0 0 18 19" fill="none" aria-hidden>
                    <circle cx="9" cy="3.5" r="2.5" stroke="#3a3a3a" strokeWidth="1.8" />
                    <path d="M4 6h10l3 12H1z" fill="#3a3a3a" />
                    <text x="3" y="15" fontSize="8" fontWeight="700" fontFamily="Liberation Sans, sans-serif" fill="#f4b42c">KG</text>
                  </svg>
                </IconButton>
              </ControlPair>
            </FormRow>
            <FormRow>
              <RowText>Ratio of Static Weight Effect:</RowText>
              <Ratio>
                <RowLabel htmlFor="vert">Vertical =</RowLabel>
                <NumberBox id="vert" defaultValue="1" />
                <RowLabel htmlFor="horz">Horizontal</RowLabel>
                <NumberBox id="horz" defaultValue="1" />
              </Ratio>
            </FormRow>
            <Divider $h={32} $side={154}>Motion Definition</Divider>
            <FormRow>
              <RowLabel htmlFor="method">Motion Definition Method:</RowLabel>
              <Combo id="method" options={["Direct Method (w/r to vessel axis)"]} h={22} framed />
            </FormRow>
          </VesselForm>
          <Sheets>
            <Sheet>
              <SheetHead $h={19}>Rotational Motion</SheetHead>
              <ComboRow label="Method" options={["Periods and Amplitudes"]} h={23} labelW={115} left />
              <SheetHead $h={19}>Center of Rotation</SheetHead>
              {["X", "Y", "Z"].map((n) => (
                <ValueRow key={n} label={n} unit="mm" {...v} />
              ))}
              {[["x", "RX (Roll)"], ["y", "RY (Yaw)"], ["z", "RZ (Pitch)"]].map(([a, n]) => (
                <React.Fragment key={a}>
                  <SheetHead $h={19}>{n}</SheetHead>
                  <ValueRow label={`Period (Tr${a})`} unit="s" {...v} />
                  <ValueRow label={`Amplitude (Hr${a})`} unit="deg" {...v} />
                </React.Fragment>
              ))}
            </Sheet>
            <Sheet>
              <SheetHead $h={19}>Translational Motion</SheetHead>
              <ComboRow label="Method" options={["Periods and Amplitudes"]} h={23} labelW={100} left />
              {[["x", "X (Surge)"], ["y", "Y (Heave)"], ["z", "Z (Sway)"]].map(([a, n]) => (
                <React.Fragment key={a}>
                  <SheetHead $h={19}>{n}</SheetHead>
                  <ValueRow label={`Period (T${a})`} unit="s" {...r} />
                  <ValueRow label={`Amplitude (H${a})`} unit="mm" {...r} />
                </React.Fragment>
              ))}
            </Sheet>
          </Sheets>
          <SheetTabs>
            <Pager aria-label="Previous"><Chevron d="M6 1 1 6l5 5" /></Pager>
            <Pager aria-label="Next"><Chevron d="m1 1 5 5-5 5" /></Pager>
            <SheetTab>Untitled</SheetTab>
            <TabFill />
          </SheetTabs>
        </VesselPanel>
        <Actions>
          <ActionStack $gap={5}>
            <PushButton $h={27} $start>
              <svg width="17" height="14" viewBox="0 0 17 14" fill="#fff" stroke="#6f86b8" aria-hidden>
                <path d="M.5.5h16v13H.5z" />
                <path d="M1 1h15v2H1z" fill="#5b86cc" stroke="none" />
                <path d="M4.500 3v10M8.500 3v10M12.500 3v10M1 4h15M1 7.500h15M1 10.500h15" />
              </svg>
              Table
            </PushButton>
            <IconPair>
              <IconButton $w={24} $h={24} aria-label="Add">
                <svg width="18" height="18" viewBox="0 0 18 18" aria-hidden>
                  <circle cx="9" cy="9" r="8.5" fill="#2e9f4c" />
                  <path d="M9 4.500v9M4.500 9h9" stroke="#fff" strokeWidth="2.2" />
                </svg>
              </IconButton>
              <IconButton $w={24} $h={24} aria-label="Remove">
                <svg width="18" height="18" viewBox="0 0 18 18" stroke="#ee2f35" strokeWidth="4" aria-hidden>
                  <path d="m2 1 14 16M16 1 2 17" />
                </svg>
              </IconButton>
            </IconPair>
          </ActionStack>
          <ActionStack $gap={2}>
            <PushButton $h={24}><Primary><u>O</u>K</Primary></PushButton>
            <PushButton $h={24}><span><u>C</u>ancel</span></PushButton>
            <PushButton $h={24}><span><u>H</u>elp</span></PushButton>
          </ActionStack>
        </Actions>
      </VesselBody>
    </Window>
  );
};

/* ---------- page ---------- */

const ToolLabel = ({ text, menu }: { text: string[]; menu?: boolean }) =>
  text.length === 1 ? (
    <ToolText $below>
      {text[0]}
      {menu && <Caret />}
    </ToolText>
  ) : (
    <ToolText>
      <span>{text[0]}</span>
      <LastLine>
        {text[1]}
        {menu && <Caret />}
      </LastLine>
    </ToolText>
  );

export default function App() {
  const [tab, setTab] = useState("Home");
  return (
    <>
      <GlobalStyle />
      <Page>
        <Shell>
          <Grain aria-hidden>
            <filter id="grain">
              <feTurbulence type="fractalNoise" baseFrequency="0.45" numOctaves="2" />
              <feColorMatrix values="0 0 0 0 0.6  0 0 0 0 0.6  0 0 0 0 0.6  2.5 0 0 0 -1" />
            </filter>
            <rect width="100%" height="100%" filter="url(#grain)" />
          </Grain>
          <Bezel>
            <Screen>
              <TitleBar>
                <CaptionButton aria-label="Minimize"><svg width="7" height="10" aria-hidden><path d="M0 8.500h7" stroke="#111" strokeWidth="2" /></svg></CaptionButton>
                <CaptionButton aria-label="Restore"><svg width="9" height="9" fill="none" stroke="#111" aria-hidden><path d="M.5 3.500h5v5h-5zM2.500 3V.5h5.500v5.500H6" /></svg></CaptionButton>
                <CaptionButton aria-label="Close"><Cross size={9} /></CaptionButton>
              </TitleBar>
              <TabBar>
                <FileTab><u>F</u>ile</FileTab>
                {tabs.map((t) => (
                  <Tab key={t} $on={t === tab} onClick={() => setTab(t)}>{t}</Tab>
                ))}
              </TabBar>
              <Ribbon>
                {groups.map((g) => (
                  <Group key={g.name} $w={g.w}>
                    {g.tools && (
                      <GroupItems>
                        {g.tools.map((t) => (
                          <Tool key={t.icon} $w={t.w}>
                            {icons[t.icon]}
                            <ToolLabel text={t.text} menu={t.menu} />
                          </Tool>
                        ))}
                      </GroupItems>
                    )}
                    {g.small && (
                      <SmallTools $gap={g.gap!} $top={g.top!}>
                        {g.small.map((s) => (
                          <SmallTool key={s.name} $w={s.w}>
                            {smallIcons[s.name]}
                            <span>{s.name}</span>
                            <Caret />
                          </SmallTool>
                        ))}
                      </SmallTools>
                    )}
                    <GroupName>{g.name}</GroupName>
                  </Group>
                ))}
              </Ribbon>
              <Work>
                <LeftBar>
                  {sideItems.map((it, i) =>
                    it[0] === "icon" ? (
                      <SideButton key={i} aria-label={it[1]}>{it[2]}</SideButton>
                    ) : it[0] === "rule" ? (
                      <SideRule key={i} />
                    ) : it[0] === "grip" ? (
                      <Grip key={i} />
                    ) : (
                      <Spacer key={i} $h={it[1]} />
                    )
                  )}
                </LeftBar>
                <Canvas>
                  <Model viewBox="259 424 1710 813" role="img" aria-label="Structural model">
                    <clipPath id="upperArea"><path d="M0 77H1560V1200H0z" /></clipPath>
                    <Upper />
                    <Lower />
                    <Axes />
                  </Model>
                  <WindWindow />
                  <VesselWindow />
                </Canvas>
                <RightBar>
                  <Grip />
                  <PushButton>Combinations</PushButton>
                  <ResultPanel name="Analysis" graph tight />
                  <PushButton>Contours</PushButton>
                  {panels.map((p) => (
                    <ResultPanel key={p.name} {...p} />
                  ))}
                </RightBar>
              </Work>
            </Screen>
          </Bezel>
        </Shell>
      </Page>
    </>
  );
}
